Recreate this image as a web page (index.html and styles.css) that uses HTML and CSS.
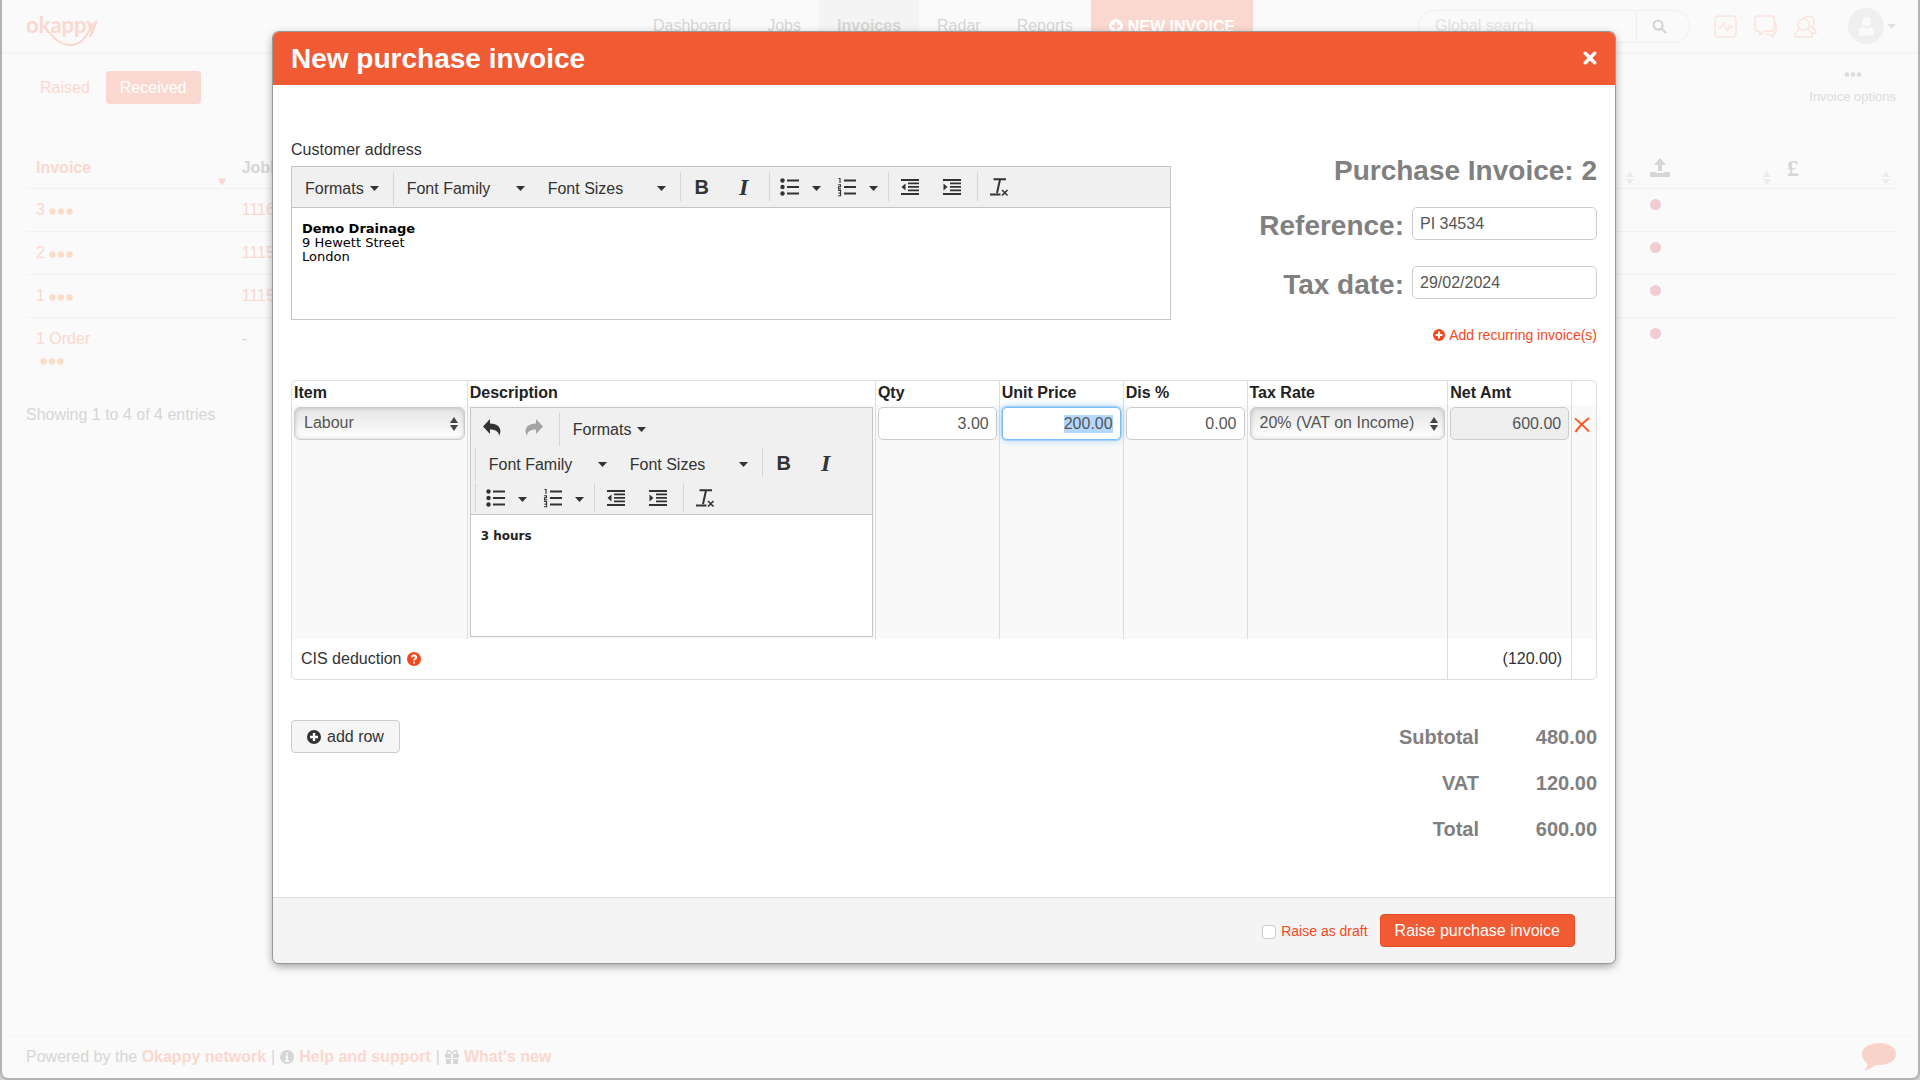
FILE: index.html
```html
<!DOCTYPE html>
<html lang="en">
<head>
    <meta charset="UTF-8">
    <meta name="viewport" content="width=device-width, initial-scale=1.0">
    <title>Okappy - New purchase invoice</title>
    <link rel="stylesheet" href="styles.css">
</head>
<body>
    <!-- shared icons -->
    <svg class="sprite" aria-hidden="true">
        <symbol id="i-caret" viewBox="0 0 9 5"><path d="M0 0h9L4.500 5z" fill="currentColor"/></symbol>
        <symbol id="i-plus" viewBox="0 0 14 14">
            <circle cx="7" cy="7" r="7" fill="currentColor"/>
            <path class="knock" d="M7 3v8M3 7h8" stroke-width="2.400" fill="none"/>
        </symbol>
        <symbol id="i-bullets" viewBox="0 0 20 20">
            <g fill="currentColor">
                <circle cx="2.500" cy="3.500" r="2.200"/><circle cx="2.500" cy="10" r="2.200"/><circle cx="2.500" cy="16.500" r="2.200"/>
                <path d="M7 2.500h12v2H7zM7 9h12v2H7zM7 15.500h12v2H7z"/>
            </g>
        </symbol>
        <symbol id="i-numbers" viewBox="0 0 20 20">
            <path d="M7 2.500h12v2H7zM7 9h12v2H7zM7 15.500h12v2H7z" fill="currentColor"/>
            <path d="M1.500 1.500H3V6M1 7.700h2.500v2H1.500v2.200h2.500M1 13.500h2.600v5.200H1M1.500 16.100h2" fill="none" stroke="currentColor" stroke-width="1.100"/>
        </symbol>
        <symbol id="i-outdent" viewBox="0 0 20 20">
            <path d="M1 2h18v2H1zM8 5.500h11v1.800H8zM8 9h11v1.800H8zM8 12.500h11v1.800H8zM1 16h18v2H1zM5.500 6.500v7L1.500 10z" fill="currentColor"/>
        </symbol>
        <symbol id="i-indent" viewBox="0 0 20 20">
            <path d="M1 2h18v2H1zM8 5.500h11v1.800H8zM8 9h11v1.800H8zM8 12.500h11v1.800H8zM1 16h18v2H1zM1.500 6.500v7l4-3.500z" fill="currentColor"/>
        </symbol>
        <symbol id="i-clear" viewBox="0 0 20 20">
            <path d="M4.500 2.200H17M11 2.500L8 16M1 17.500h10.500" fill="none" stroke="currentColor" stroke-width="2"/>
            <path d="M13 13l5.500 5.500M18.500 13L13 18.500" fill="none" stroke="currentColor" stroke-width="1.600"/>
        </symbol>
        <symbol id="i-updown" viewBox="0 0 8 14"><path d="M4 0l4 6H0zM4 14l4-6H0z" fill="currentColor"/></symbol>
        <symbol id="i-dots" viewBox="0 0 24 7">
            <g fill="currentColor"><circle cx="3.500" cy="3.500" r="3.200"/><circle cx="12" cy="3.500" r="3.200"/><circle cx="20.500" cy="3.500" r="3.200"/></g>
        </symbol>
    </svg>

    <div class="page">
        <header class="topbar">
            <a href="#" class="logo" aria-label="okappy">
                <span>okappy</span>
                <svg viewBox="0 0 70 32"><path d="M20 14C29 24 34 30 44 30S60 24 67 8" fill="none" stroke="currentColor" stroke-width="2"/></svg>
            </a>
            <nav class="nav">
                <a href="#">Dashboard</a>
                <a href="#">Jobs</a>
                <a href="#" class="active">Invoices</a>
                <a href="#">Radar</a>
                <a href="#">Reports</a>
                <a href="#" class="nav-new"><svg class="icon14"><use href="#i-plus"/></svg>NEW INVOICE</a>
            </nav>
            <div class="tools">
                <form class="search">
                    <input type="text" placeholder="Global search" aria-label="Global search">
                    <button type="button" aria-label="Search">
                        <svg viewBox="0 0 16 16"><circle cx="6.500" cy="6.500" r="4.800"/><path d="M10 10l5 5"/></svg>
                    </button>
                </form>
                <a href="#" class="tool" aria-label="Activity"><svg viewBox="0 0 24 24"><rect x="1" y="1" width="22" height="22" rx="4"/><path d="M4 13h4l2-5 4 9 2.500-6 1.500 2h2"/></svg></a>
                <a href="#" class="tool" aria-label="Messages"><svg viewBox="0 0 24 24"><path d="M4 1h14a3 3 0 0 1 3 3v10a3 3 0 0 1-3 3h-7l-5 4v-4H4a3 3 0 0 1-3-3V4a3 3 0 0 1 3-3zM21 7c2 1 2 2 2 4v6c0 2-1 3-3 3v3l-4-3h-4"/></svg></a>
                <a href="#" class="tool" aria-label="Contacts"><svg viewBox="0 0 24 24"><circle cx="10" cy="10" r="6"/><path d="M6 15c-3 1-5 3-5 8h18c0-5-2-7-5-8M10 4c2-4 11-4 11 3 0 3-1 5-3 6 3 1 5 3 5 6h-4"/></svg></a>
                <button type="button" class="account" aria-label="Account">
                    <span class="avatar"><svg viewBox="0 0 18 20"><circle cx="9" cy="5.500" r="5"/><path d="M1 20v-4c0-4 3-5 4-5 2 2 6 2 8 0 1 0 4 1 4 5v4z"/></svg></span>
                    <svg class="caret"><use href="#i-caret"/></svg>
                </button>
            </div>
        </header>

        <div class="subbar">
            <div class="tabs">
                <a href="#">Raised</a>
                <a href="#" class="active">Received</a>
            </div>
            <button type="button" class="options"><svg><use href="#i-dots"/></svg>Invoice options</button>
        </div>

        <main class="list">
            <table class="invoices">
                <colgroup><col class="c-invoice"><col><col class="c-sent"><col class="c-paid"></colgroup>
                <thead>
                    <tr>
                        <th class="sorted"><span>Invoice</span><svg class="sort-down" viewBox="0 0 9 8"><path d="M0 0h9L4.500 8z" fill="currentColor"/></svg></th>
                        <th><span>JobID</span><svg class="sort"><use href="#i-updown"/></svg></th>
                        <th><svg class="upload" viewBox="0 0 20 20"><path d="M10 0l6 7h-4v6H8V7H4zM0 14h6v1h8v-1h6v5H0z" fill="currentColor"/></svg><svg class="sort"><use href="#i-updown"/></svg></th>
                        <th><span class="pound">£</span><svg class="sort"><use href="#i-updown"/></svg></th>
                    </tr>
                </thead>
                <tbody>
                    <tr><td><a href="#">3</a> <svg class="dots"><use href="#i-dots"/></svg></td><td><a href="#">1116</a></td><td><i class="dot"></i></td><td></td></tr>
                    <tr><td><a href="#">2</a> <svg class="dots"><use href="#i-dots"/></svg></td><td><a href="#">1115</a></td><td><i class="dot"></i></td><td></td></tr>
                    <tr><td><a href="#">1</a> <svg class="dots"><use href="#i-dots"/></svg></td><td><a href="#">1115</a></td><td><i class="dot"></i></td><td></td></tr>
                    <tr><td><a href="#">1 Order</a><br>&nbsp;<svg class="dots"><use href="#i-dots"/></svg></td><td>-</td><td><i class="dot"></i></td><td></td></tr>
                </tbody>
            </table>
            <p class="count">Showing 1 to 4 of 4 entries</p>
        </main>

        <footer class="footer">
            <span>Powered by the <a href="#">Okappy network</a></span>
            <span>|</span>
            <svg class="icon14" viewBox="0 0 14 14"><circle cx="7" cy="7" r="7" fill="currentColor"/><path d="M7 2.500v2M5.500 6.500H7V11M5 11h4" stroke="#fafafa" stroke-width="1.800" fill="none"/></svg>
            <a href="#">Help and support</a>
            <span>|</span>
            <svg class="icon14" viewBox="0 0 14 14"><path d="M0 4h6v4H0zM8 4h6v4H8zM1 9h5v5H1zM8 9h5v5H8z" fill="currentColor"/><path d="M7 4C5-1 1 0 2 4M7 4c2-5 6-4 5 0" fill="none" stroke="currentColor" stroke-width="1.500"/></svg>
            <a href="#">What's new</a>
            <button type="button" class="chat" aria-label="Chat">
                <svg viewBox="0 0 34 28"><path d="M17 0c9 0 17 4 17 11s-8 11-17 11l-4 0c-3 3-7 5-11 5 3-2 4-4 3-7-3-2-5-5-5-9C0 4 8 0 17 0z" fill="currentColor"/></svg>
            </button>
        </footer>
    </div>

    <div class="overlay">
        <form class="modal" role="dialog" aria-labelledby="modal-title">
            <div class="modal-header">
                <h2 id="modal-title">New purchase invoice</h2>
                <button type="button" class="close" aria-label="Close"><svg viewBox="0 0 12 12"><path d="M2 2l8 8M10 2l-8 8"/></svg></button>
            </div>

            <div class="modal-body">
                <div class="details">
                    <div class="address">
                        <label for="address">Customer address</label>
                        <div class="editor">
                            <div class="toolbar">
                                <div class="row">
                                    <div class="group">
                                        <button type="button" class="tb-menu">Formats<svg class="caret"><use href="#i-caret"/></svg></button>
                                    </div>
                                    <div class="group">
                                        <button type="button" class="tb-menu wide">Font Family<svg class="caret"><use href="#i-caret"/></svg></button>
                                        <button type="button" class="tb-menu wide">Font Sizes<svg class="caret"><use href="#i-caret"/></svg></button>
                                    </div>
                                    <div class="group small">
                                        <button type="button" class="tb-icon bold">B</button>
                                        <button type="button" class="tb-icon italic">I</button>
                                    </div>
                                    <div class="group small">
                                        <button type="button" class="tb-split" aria-label="Bullet list"><svg><use href="#i-bullets"/></svg><svg class="caret"><use href="#i-caret"/></svg></button>
                                        <button type="button" class="tb-split" aria-label="Numbered list"><svg><use href="#i-numbers"/></svg><svg class="caret"><use href="#i-caret"/></svg></button>
                                    </div>
                                    <div class="group small">
                                        <button type="button" class="tb-icon" aria-label="Decrease indent"><svg><use href="#i-outdent"/></svg></button>
                                        <button type="button" class="tb-icon" aria-label="Increase indent"><svg><use href="#i-indent"/></svg></button>
                                    </div>
                                    <div class="group small">
                                        <button type="button" class="tb-icon" aria-label="Clear formatting"><svg><use href="#i-clear"/></svg></button>
                                    </div>
                                </div>
                            </div>
                            <div class="editor-text address-text" id="address" contenteditable="true"><strong>Demo Drainage</strong><br>9 Hewett Street<br>London</div>
                        </div>
                    </div>

                    <div class="meta">
                        <h3>Purchase Invoice: 2</h3>
                        <div class="field">
                            <label for="reference">Reference:</label>
                            <input type="text" id="reference" class="input" value="PI 34534">
                        </div>
                        <div class="field">
                            <label for="tax-date">Tax date:</label>
                            <input type="text" id="tax-date" class="input" value="29/02/2024">
                        </div>
                        <a href="#" class="recurring"><svg class="icon12"><use href="#i-plus"/></svg>Add recurring invoice(s)</a>
                    </div>
                </div>

                <table class="lines">
                    <colgroup>
                        <col class="l-item"><col class="l-desc"><col class="l-num"><col class="l-num"><col class="l-num"><col class="l-tax"><col class="l-num"><col>
                    </colgroup>
                    <thead>
                        <tr>
                            <th>Item</th>
                            <th>Description</th>
                            <th>Qty</th>
                            <th>Unit Price</th>
                            <th>Dis %</th>
                            <th>Tax Rate</th>
                            <th>Net Amt</th>
                            <th></th>
                        </tr>
                    </thead>
                    <tbody>
                        <tr>
                            <td>
                                <div class="select">
                                    <select aria-label="Item"><option>Labour</option></select>
                                    <svg><use href="#i-updown"/></svg>
                                </div>
                            </td>
                            <td>
                                <div class="editor">
                                    <div class="toolbar">
                                        <div class="row">
                                            <div class="group small">
                                                <button type="button" class="tb-icon" aria-label="Undo"><svg viewBox="0 0 20 20"><path d="M8 1v4.500c8 0 13 5 9 12.500 0-4-3-6.500-9-6.500V16L1 8.500z" fill="currentColor"/></svg></button>
                                                <button type="button" class="tb-icon" aria-label="Redo" disabled><svg viewBox="0 0 20 20"><path d="M12 1v4.500C4 5.500-1 10.500 3 18c0-4 3-6.500 9-6.500V16l7-7.500z" fill="currentColor"/></svg></button>
                                            </div>
                                            <div class="group">
                                                <button type="button" class="tb-menu">Formats<svg class="caret"><use href="#i-caret"/></svg></button>
                                            </div>
                                        </div>
                                        <div class="row">
                                            <div class="group">
                                                <button type="button" class="tb-menu wide">Font Family<svg class="caret"><use href="#i-caret"/></svg></button>
                                                <button type="button" class="tb-menu wide">Font Sizes<svg class="caret"><use href="#i-caret"/></svg></button>
                                            </div>
                                            <div class="group small">
                                                <button type="button" class="tb-icon bold">B</button>
                                                <button type="button" class="tb-icon italic">I</button>
                                            </div>
                                        </div>
                                        <div class="row">
                                            <div class="group small">
                                                <button type="button" class="tb-split" aria-label="Bullet list"><svg><use href="#i-bullets"/></svg><svg class="caret"><use href="#i-caret"/></svg></button>
                                                <button type="button" class="tb-split" aria-label="Numbered list"><svg><use href="#i-numbers"/></svg><svg class="caret"><use href="#i-caret"/></svg></button>
                                            </div>
                                            <div class="group small">
                                                <button type="button" class="tb-icon" aria-label="Decrease indent"><svg><use href="#i-outdent"/></svg></button>
                                                <button type="button" class="tb-icon" aria-label="Increase indent"><svg><use href="#i-indent"/></svg></button>
                                            </div>
                                            <div class="group small">
                                                <button type="button" class="tb-icon" aria-label="Clear formatting"><svg><use href="#i-clear"/></svg></button>
                                            </div>
                                        </div>
                                    </div>
                                    <div class="editor-text desc-text" contenteditable="true" aria-label="Description">3 hours</div>
                                </div>
                            </td>
                            <td><input type="text" class="input num" aria-label="Qty" value="3.00"></td>
                            <td><input type="text" class="input num" id="unit-price" aria-label="Unit Price" value="200.00"></td>
                            <td><input type="text" class="input num" aria-label="Dis %" value="0.00"></td>
                            <td>
                                <div class="select">
                                    <select aria-label="Tax Rate"><option>20% (VAT on Income)</option></select>
                                    <svg><use href="#i-updown"/></svg>
                                </div>
                            </td>
                            <td><input type="text" class="input num" aria-label="Net Amt" value="600.00" readonly></td>
                            <td><button type="button" class="remove" aria-label="Remove row"><svg viewBox="0 0 16 16"><path d="M1 1.500c4 3 9 8 14 13" stroke-width="1.800"/><path d="M15 1C10 5 5 9 1.500 15" stroke-width="2.200"/></svg></button></td>
                        </tr>
                    </tbody>
                    <tfoot>
                        <tr>
                            <td colspan="6">CIS deduction <svg class="icon14 help" viewBox="0 0 14 14"><circle cx="7" cy="7" r="7" fill="currentColor"/><path d="M4.800 5.400C5 2.800 9.300 3 9.200 5.400 9.200 6.900 7 6.900 7 8.600M7 9.700v1.800" stroke="#fff" stroke-width="1.900" fill="none"/></svg></td>
                            <td class="amount">(120.00)</td>
                            <td></td>
                        </tr>
                    </tfoot>
                </table>

                <div class="summary">
                    <button type="button" class="btn btn-add"><svg class="icon14"><use href="#i-plus"/></svg>add row</button>
                    <table class="totals">
                        <tr><th>Subtotal</th><td>480.00</td></tr>
                        <tr><th>VAT</th><td>120.00</td></tr>
                        <tr><th>Total</th><td>600.00</td></tr>
                    </table>
                </div>
            </div>

            <div class="modal-footer">
                <label class="draft"><input type="checkbox">Raise as draft</label>
                <button type="submit" class="btn btn-primary">Raise purchase invoice</button>
            </div>
        </form>
    </div>

    <script>
        // start with the unit price ready to be overwritten
        const unitPrice = document.getElementById('unit-price');
        unitPrice.focus();
        unitPrice.select();
    </script>
</body>
</html>
```

FILE: styles.css
```css
:root {
    --orange: #f05b34;
    --link: #f4481c;
    --text: #333;
    --muted: #808080;
    --faded-text: #d6d6d6;
    --faded-orange: #fad8d0;
    --page-bg: #fafafa;
    --line: #ddd;
    --knock: #fff;
}

* {
    box-sizing: border-box;
}

body {
    margin: 0;
    background: #d0d0d0;
    color: var(--text);
    font-family: "Liberation Sans", Arial, sans-serif;
    font-size: 16px;
    line-height: 20px;
}

a {
    color: inherit;
    text-decoration: none;
}

button,
input,
select {
    font: inherit;
    color: inherit;
}

button {
    padding: 0;
    border: none;
    background: none;
    cursor: pointer;
}

svg {
    fill: none;
}

.sprite {
    display: none;
}

.knock {
    stroke: var(--knock);
}

.icon14 {
    width: 14px;
    height: 14px;
}

.icon12 {
    width: 12px;
    height: 12px;
}

.caret {
    width: 9px;
    height: 5px;
}

/* faded page behind the dialog */
.page {
    display: flex;
    flex-direction: column;
    min-height: 100vh;
    background: var(--page-bg);
    color: var(--faded-text);
    border: solid #b4b4b4;
    border-width: 0 2px 2px;
    border-radius: 0 0 8px 8px;
}

.topbar {
    display: grid;
    grid-template-columns: 18fr auto 19fr;
    height: 53px;
    padding: 0 22px 0 24px;
    border-bottom: 1px solid #f3f3f3;
    box-shadow: 0 2px 6px rgba(0, 0, 0, 0.02);
}

.logo {
    position: relative;
    justify-self: start;
    width: 70px;
    color: var(--faded-orange);
    font-family: Lato, sans-serif;
    font-size: 22px;
    font-weight: 700;
    line-height: 50px;
}

.logo svg {
    position: absolute;
    top: 15px;
    left: 0;
    width: 70px;
}

.nav {
    display: flex;
    line-height: 51px;
}

.nav a {
    padding: 0 18px;
}

.nav .active {
    background: #f4f4f4;
    font-weight: 700;
}

.nav .nav-new {
    --knock: var(--faded-orange);
    display: flex;
    align-items: center;
    gap: 5px;
    background: var(--faded-orange);
    color: #fff;
    font-weight: 700;
}

.tools {
    display: flex;
    align-items: center;
    justify-content: flex-end;
    gap: 17px;
}

.search {
    display: flex;
    width: 272px;
    height: 33px;
    margin-right: 7px;
    border: 1px solid #f0f0f0;
    border-radius: 17px;
}

.search input {
    flex: 1;
    min-width: 0;
    padding: 0 16px;
    border: none;
    background: none;
    outline: none;
}

.search input::placeholder {
    color: #e2e2e2;
}

.search button {
    width: 53px;
    padding-right: 8px;
    border-left: 1px solid #f0f0f0;
}

.search svg {
    width: 15px;
    height: 15px;
    stroke: #d0d0d0;
    stroke-width: 2;
    vertical-align: middle;
}

.tool {
    display: flex;
}

.tool svg {
    width: 23px;
    height: 23px;
    stroke: #fbe3dc;
    stroke-width: 1.5;
}

.account {
    display: flex;
    align-items: center;
    gap: 3px;
    margin-left: 14px;
    color: #e2e2e2;
}

.avatar {
    display: flex;
    align-items: center;
    justify-content: center;
    width: 36px;
    height: 36px;
    border-radius: 50%;
    background: #efefef;
}

.avatar svg {
    width: 17px;
    height: 20px;
    fill: var(--page-bg);
}

.subbar {
    display: flex;
    align-items: center;
    justify-content: space-between;
    height: 66px;
    padding: 4px 22px 0 24px;
    border-bottom: 1px solid #f8f8f8;
}

.tabs {
    display: flex;
    align-items: center;
    color: var(--faded-orange);
}

.tabs a {
    padding: 6px 14px;
    margin-right: 2px;
    border-radius: 4px;
    line-height: 21px;
}

.tabs .active {
    background: var(--faded-orange);
    color: #fff;
}

.options {
    display: flex;
    flex-direction: column;
    align-items: flex-end;
    gap: 10px;
    margin-top: 4px;
    color: #dcdcdc;
    font-size: 13px;
}

.options svg {
    align-self: center;
    width: 18px;
    height: 5px;
}

.list {
    flex: 1;
    padding: 32px 22px 0 24px;
}

.invoices {
    width: 100%;
    table-layout: fixed;
    border-collapse: collapse;
}

.c-invoice {
    width: 11%;
}

.c-sent {
    width: 137px;
}

.c-paid {
    width: 119px;
}

.invoices th,
.invoices td {
    border-bottom: 1px solid #f2f2f2;
    text-align: left;
    vertical-align: top;
}

.invoices th {
    position: relative;
    height: 37px;
    padding: 7px 10px 8px;
}

.invoices td {
    padding: 10px 10px 11px;
    line-height: 21px;
}

.invoices tr:last-child td {
    border-bottom: none;
}

.invoices .sorted,
.invoices a {
    color: var(--faded-orange);
}

.sort,
.sort-down {
    position: absolute;
    right: 6px;
    bottom: 2px;
    width: 8px;
    height: 16px;
    color: #ececec;
}

.sort-down {
    height: 8px;
    color: var(--faded-orange);
}

.upload {
    display: block;
    width: 20px;
    height: 20px;
}

.pound {
    display: block;
    font-family: "Liberation Serif", serif;
    font-size: 24px;
}

.dots {
    width: 24px;
    height: 7px;
    color: #fcdcc8;
}

.dot {
    display: block;
    width: 11px;
    height: 11px;
    border-radius: 50%;
    background: #efcdd0;
}

.count {
    margin: 24px 0 0;
}

.footer {
    display: flex;
    align-items: center;
    gap: 5px;
    height: 43px;
    padding: 0 22px 0 24px;
    border-top: 1px solid #f5f5f5;
}

.footer a {
    color: var(--faded-orange);
    font-weight: 700;
}

.chat {
    margin-left: auto;
    color: #f9d3ca;
}

.chat svg {
    width: 34px;
    height: 28px;
    vertical-align: middle;
}

/* dialog */
.overlay {
    position: absolute;
    top: 0;
    left: 0;
    width: 100%;
    padding: 32px 305px 32px 273px;
}

.modal {
    overflow: hidden;
    border-radius: 6px;
    background: #fff;
    box-shadow: 0 0 0 1px #999, 0 3px 10px rgba(0, 0, 0, 0.4);
}

.modal-header {
    display: flex;
    align-items: center;
    justify-content: space-between;
    height: 53px;
    padding: 0 18px;
    background: var(--orange);
    color: #fff;
}

.modal-header h2 {
    margin: 0;
    font-size: 28px;
    line-height: 52px;
}

.close {
    display: flex;
    padding-bottom: 2px;
}

.close svg {
    width: 14px;
    height: 14px;
    stroke: #fff;
    stroke-width: 3;
    stroke-linecap: round;
}

.modal-body {
    padding: 0 18px 45px;
}

.details {
    display: flex;
    justify-content: space-between;
    min-height: 295px;
}

.address {
    width: 67.4%;
    padding-top: 55px;
}

.address > label {
    display: block;
    margin-bottom: 6px;
}

.editor {
    border: 1px solid #c5c5c5;
    background: #fff;
}

.toolbar {
    display: flex;
    flex-direction: column;
    gap: 2px;
    padding: 5px 0 2px;
    border-bottom: 1px solid #c5c5c5;
    background: #f0f0f0;
}

.row {
    display: flex;
    align-items: flex-start;
}

.row + .row {
    margin-left: 4px;
}

.group {
    display: flex;
    height: 33px;
    padding-right: 4px;
    border-left: 1px solid #d5d5d5;
}

.group.small {
    height: 29px;
}

.row:first-child .group:first-child {
    border-left: none;
}

.tb-menu {
    display: flex;
    align-items: center;
    justify-content: space-between;
    gap: 6px;
    padding: 0 10px 0 13px;
}

.tb-menu.wide {
    width: 141px;
}

.tb-icon {
    display: flex;
    align-items: center;
    justify-content: center;
    width: 42px;
}

.tb-icon:disabled {
    opacity: 0.4;
}

.tb-icon svg,
.tb-split svg:first-child {
    width: 20px;
    height: 20px;
}

.tb-icon.bold {
    font-size: 20px;
    font-weight: 700;
}

.tb-icon.italic {
    font-family: "Liberation Serif", serif;
    font-size: 24px;
    font-style: italic;
    font-weight: 700;
}

.tb-split {
    display: flex;
    align-items: center;
    justify-content: space-between;
    width: 57px;
    padding: 0 6px 0 10px;
}

.tb-split .caret {
    margin-top: 4px;
}

.editor-text {
    padding: 14px 10px;
    color: #000;
    font-family: "DejaVu Sans", Verdana, sans-serif;
    font-size: 13px;
    line-height: 14px;
}

.address-text {
    min-height: 111px;
}

.desc-text {
    min-height: 121px;
    font-size: 12px;
    font-weight: 700;
    color: #222;
}

.meta {
    display: flex;
    flex-direction: column;
    align-items: flex-end;
    gap: 26px;
    padding-top: 69px;
    color: var(--muted);
}

.meta h3 {
    margin: 0 0 -7px;
    font-size: 28px;
    line-height: 34px;
}

.field {
    display: flex;
    align-items: flex-end;
    gap: 8px;
}

.field label {
    font-size: 28px;
    font-weight: 700;
    line-height: 28px;
}

.field .input {
    width: 185px;
}

.input {
    width: 100%;
    height: 33px;
    padding: 0 7px;
    border: 1px solid #ccc;
    border-radius: 5px;
    background: #fff;
    color: #555;
}

.input:focus {
    outline: none;
    border: 1px solid #7dbdf7;
    box-shadow: 0 0 0 1px #a5d2fa, 0 0 8px rgba(100, 175, 240, 0.6);
}

.input::selection {
    background: #b3d7ff;
    color: #555;
}

.input:read-only {
    background: #eee;
}

.num {
    text-align: right;
}

.recurring {
    display: flex;
    align-items: center;
    gap: 4px;
    color: var(--link);
    font-size: 14px;
}

.lines {
    width: 100%;
    table-layout: fixed;
    border: 1px solid var(--line);
    border-radius: 5px;
    border-collapse: separate;
    border-spacing: 0;
}

.l-item {
    width: 13.4%;
}

.l-desc {
    width: 31.3%;
}

.l-num {
    width: 9.5%;
}

.l-tax {
    width: 15.4%;
}

.lines th,
.lines td {
    padding: 2px;
    border-left: 1px solid var(--line);
    text-align: left;
    vertical-align: top;
}

.lines th:first-child,
.lines td:first-child {
    border-left: none;
}

.lines th {
    height: 24px;
    padding: 2px;
    color: #222;
}

.lines tbody td {
    background: #f9f9f9;
}

.lines tfoot td {
    height: 40px;
    padding: 10px 9px;
}

.lines .amount {
    text-align: right;
}

.select {
    position: relative;
}

.select select {
    width: 100%;
    height: 33px;
    padding: 0 20px 2px 9px;
    appearance: none;
    border: 1px solid #ccc;
    border-radius: 6px;
    background: linear-gradient(#e4e4e4, #fff);
    box-shadow: inset 0 0 4px rgba(0, 0, 0, 0.2);
    color: #555;
}

.select svg {
    position: absolute;
    top: 10px;
    right: 7px;
    width: 8px;
    height: 14px;
    color: #444;
    pointer-events: none;
}

.remove svg {
    width: 16px;
    height: 16px;
    margin-top: 10px;
    stroke: #ff5a1f;
}

.help {
    margin-left: 1px;
    color: var(--link);
    vertical-align: -2px;
}

.summary {
    display: flex;
    align-items: flex-start;
    justify-content: space-between;
    padding-top: 34px;
}

.btn {
    height: 33px;
    padding: 0 14px;
    border: 1px solid #ccc;
    border-radius: 4px;
}

.btn-add {
    display: flex;
    align-items: center;
    gap: 6px;
    margin-top: 6px;
    padding: 0 15px;
    background: #f5f5f5;
}

.totals {
    border-spacing: 0;
    color: var(--muted);
    font-size: 20px;
    font-weight: 700;
    line-height: 46px;
}

.totals th,
.totals td {
    padding: 0;
    text-align: right;
}

.totals td {
    width: 118px;
}

.modal-footer {
    display: flex;
    align-items: center;
    justify-content: flex-end;
    gap: 12px;
    height: 66px;
    padding: 0 40px 0 18px;
    border-top: 1px solid var(--line);
    background: #f4f4f4;
}

.draft {
    display: flex;
    align-items: center;
    gap: 5px;
    color: var(--link);
    font-size: 14px;
}

.draft input {
    width: 14px;
    height: 14px;
    margin: 2px 0 0;
    appearance: none;
    border: 1px solid #ccc;
    border-radius: 3px;
    background: #fff;
}

.btn-primary {
    border-color: #e84c22;
    background: var(--orange);
    color: #fff;
}
```
